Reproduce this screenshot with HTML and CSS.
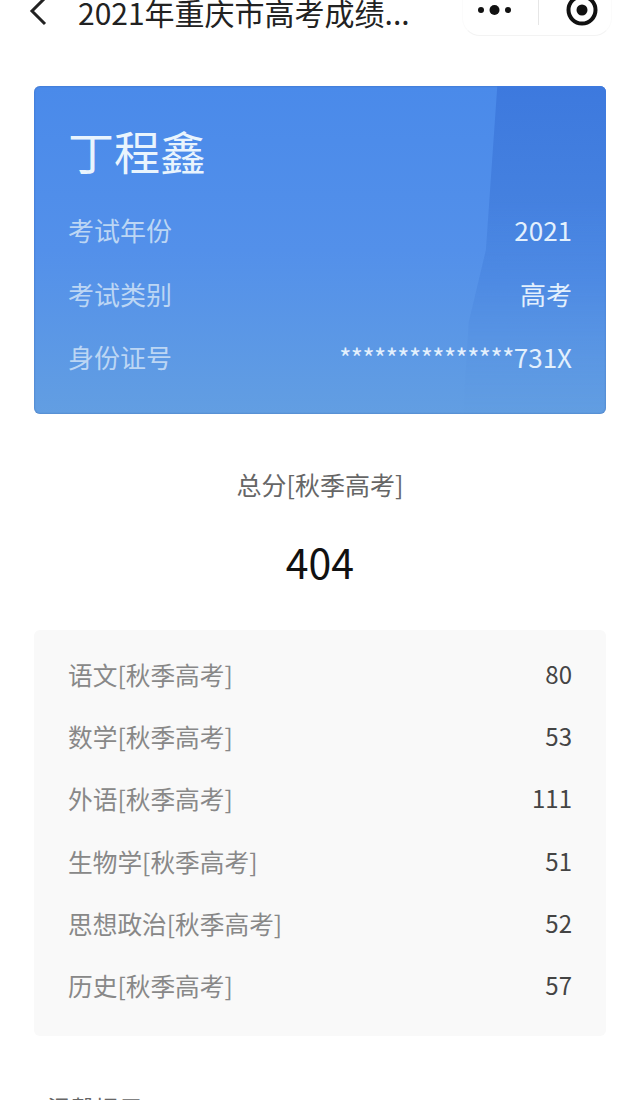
FILE: index.html
```html
<!DOCTYPE html>
<html lang="zh-CN">
<head>
<meta charset="utf-8">
<title>2021年重庆市高考成绩</title>
<link rel="stylesheet" href="styles.css">
</head>
<body>
<header class="nav">
  <svg class="back" width="18" height="30" viewBox="0 0 18 30"><path d="M16 2 L3 15 L16 28" fill="none" stroke="#222" stroke-width="3"/></svg>
  <div class="title">2021年重庆市高考成绩...</div>
  <div class="capsule">
    <svg class="more" width="36" height="10" viewBox="0 0 36 10"><circle cx="4" cy="5" r="3" fill="#111"/><circle cx="17.500" cy="5" r="5" fill="#111"/><circle cx="31" cy="5" r="3" fill="#111"/></svg>
    <span class="divider"></span>
    <svg class="target" width="34" height="34" viewBox="0 0 34 34"><circle cx="17" cy="17" r="13.500" fill="none" stroke="#111" stroke-width="4"/><circle cx="17" cy="17" r="5.500" fill="#111"/></svg>
  </div>
</header>
<main class="content">
  <section class="card">
    <div class="name">丁程鑫</div>
    <div class="info"><span class="label">考试年份</span><span>2021</span></div>
    <div class="info"><span class="label">考试类别</span><span>高考</span></div>
    <div class="info"><span class="label">身份证号</span><span><span class="stars">***************</span>731X</span></div>
  </section>
  <section class="total">
    <div class="total-label">总分[秋季高考]</div>
    <div class="total-score">404</div>
  </section>
  <section class="scores">
    <div class="score"><span class="subject">语文[秋季高考]</span><span>80</span></div>
    <div class="score"><span class="subject">数学[秋季高考]</span><span>53</span></div>
    <div class="score"><span class="subject">外语[秋季高考]</span><span>111</span></div>
    <div class="score"><span class="subject">生物学[秋季高考]</span><span>51</span></div>
    <div class="score"><span class="subject">思想政治[秋季高考]</span><span>52</span></div>
    <div class="score"><span class="subject">历史[秋季高考]</span><span>57</span></div>
  </section>
  <div class="tip">温馨提示</div>
</main>
</body>
</html>
```
FILE: styles.css
```css
html, body {
  margin: 0;
  height: 1100px;
  overflow: hidden;
  background: #fff;
}
body {
  font-family: "Noto Sans CJK SC", "Noto Sans", sans-serif;
  color: #444;
}
.nav {
  position: relative;
  display: flex;
  align-items: center;
  height: 24px;
  padding-left: 29px;
}
.back {
  flex: none;
  margin-top: -2px;
}
.title {
  margin-left: 31px;
  font-size: 30px;
  line-height: 24px;
  color: #222;
  white-space: nowrap;
}
.capsule {
  position: absolute;
  left: 462px;
  top: -20px;
  width: 150px;
  height: 56px;
  box-sizing: border-box;
  border: 1px solid #fbfbfb;
  border-bottom-color: #f3f3f3;
  border-radius: 18px;
}
.more {
  position: absolute;
  left: 14px;
  top: 24px;
}
.divider {
  position: absolute;
  left: 75px;
  top: 18px;
  width: 1px;
  height: 26px;
  background: #e6e6e6;
}
.target {
  position: absolute;
  left: 102px;
  top: 12px;
}
.content {
  padding: 62px 34px 0;
}
.card {
  position: relative;
  overflow: hidden;
  height: 328px;
  box-sizing: border-box;
  padding: 35px 34px 0;
  border-radius: 6px;
  color: #e3f0fd;
  background: linear-gradient(180deg, #4a8aea 0%, #5390ea 50%, #629ee2 100%);
  box-shadow: inset 0 0 2px rgba(40, 80, 150, .6);
}
.card::before {
  content: "";
  position: absolute;
  inset: 0;
  background: linear-gradient(180deg, #3d79de 0%, #4a86e0 60%, #5f9ae0 100%);
  clip-path: polygon(81% 0, 100% 0, 100% 100%, 75% 100%, 76% 72%, 79% 50%);
  -webkit-mask-image: linear-gradient(180deg, #000 35%, rgba(0, 0, 0, .5) 70%, transparent 100%);
  mask-image: linear-gradient(180deg, #000 35%, rgba(0, 0, 0, .5) 70%, transparent 100%);
}
.card > * {
  position: relative;
}
.name {
  font-size: 46px;
  line-height: 58px;
  color: #e9f4fd;
  margin-bottom: 32px;
}
.info {
  display: flex;
  justify-content: space-between;
  font-size: 26px;
  line-height: 38px;
  margin-bottom: 25.500px;
}
.stars {
  letter-spacing: -.5px;
}
.label {
  color: #bcd6f4;
}
.total {
  text-align: center;
}
.total-label {
  margin-top: 52px;
  font-size: 25px;
  line-height: 36px;
  color: #666;
}
.total-score {
  margin-top: 31px;
  font-size: 41px;
  line-height: 56px;
  color: #111;
}
.scores {
  margin-top: 41px;
  height: 406px;
  box-sizing: border-box;
  padding: 13px 34px 0;
  background: #f9f9f9;
  border-radius: 6px;
}
.score {
  display: flex;
  justify-content: space-between;
  font-size: 24px;
  line-height: 62.200px;
  color: #444;
}
.subject {
  font-size: 24.700px;
  color: #888;
}
.tip {
  margin: 54px 0 0 13px;
  font-size: 24px;
  line-height: 36px;
  color: #666;
}
```
